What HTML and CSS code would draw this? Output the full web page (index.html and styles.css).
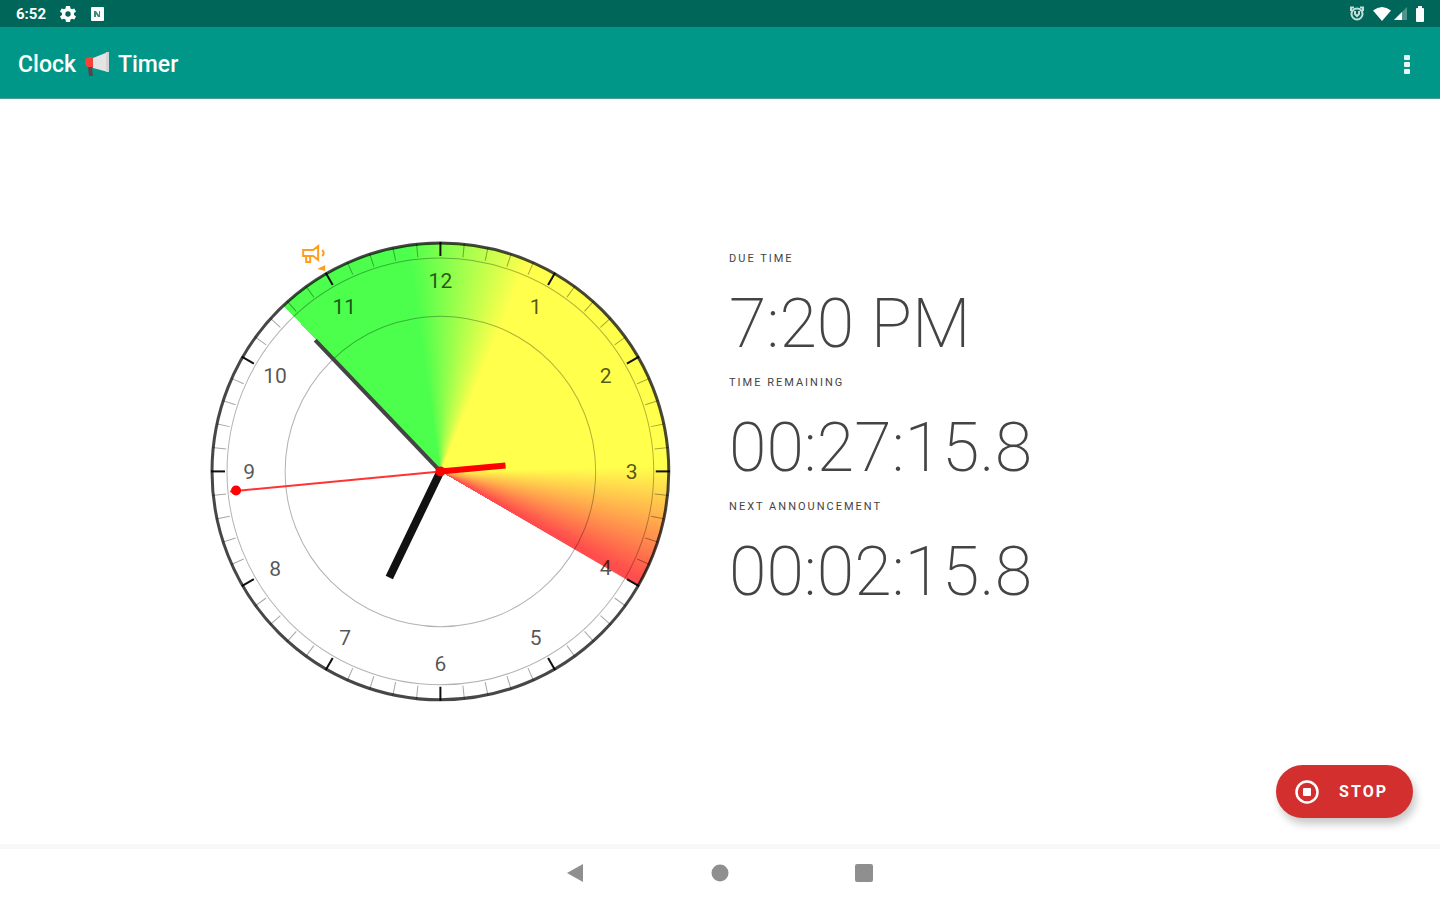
FILE: index.html
```html
<!DOCTYPE html>
<html lang="en">
<head>
    <meta charset="UTF-8">
    <meta name="viewport" content="width=device-width, initial-scale=1.0">
    <title>Clock Timer</title>
    <link rel="stylesheet" href="styles.css">
</head>
<body>

    <div class="status-bar">
        <span class="status-time">6:52</span>
        <svg class="status-icon" width="16" height="16" viewBox="0 0 16 16">
            <path d="M6 0h4l.5 2.500 1.500.8 2.300-.8 1.700 3L14 7v2l2 1.500-1.700 3-2.300-.8-1.500.8L10 16H6l-.5-2.500-1.500-.8-2.300.8-1.700-3L2 9V7L0 5.500l1.700-3 2.300.8 1.500-.8z" fill="#fff"/>
            <circle cx="8" cy="8" r="2.700" fill="#00665a"/>
        </svg>
        <svg class="status-icon" width="14" height="14" viewBox="0 0 14 14">
            <rect x="1" y="0" width="13" height="14" rx="1" fill="#fff"/>
            <path d="M4 10V4h2l3 4V4h1v6H8L6 7v3z" fill="#3d8a81"/>
        </svg>
        <span class="spacer"></span>
        <svg width="16" height="16" viewBox="0 0 16 16" fill="none" stroke="#c4dedb" stroke-width="2">
            <circle cx="8" cy="8" r="5.500"/>
            <path d="M2 5V1.500h3M11 1.500h3V5M6 5v3l2 2 2-2V5"/>
        </svg>
        <svg class="wifi" width="18" height="14" viewBox="0 0 18 14">
            <path d="M0 3.500Q9-3.500 18 3.500L9 14z" fill="#fff"/>
        </svg>
        <svg width="13" height="13" viewBox="0 0 13 13">
            <path d="M13 0v13H0z" fill="#4f958d"/>
            <path d="M8 5v8H0z" fill="#fff"/>
        </svg>
        <svg class="battery" width="10" height="16" viewBox="0 0 10 16">
            <path d="M3 0h4v2h1q1 0 1 1v12q0 1-1 1H2q-1 0-1-1V3q0-1 1-1h1z" fill="#fff"/>
        </svg>
    </div>

    <header class="app-bar">
        <h1 class="title">
            Clock
            <svg width="26" height="26" viewBox="0 0 26 26">
                <path d="M4 15h4l1 9H5z" fill="#5b4446"/>
                <path d="M9 6L24 0v20L9 16z" fill="#e4e4e4"/>
                <path d="M22 0h3v20h-3z" fill="#cfd4d4"/>
                <path d="M9 5v10H4q-3-1-3-5t3-5z" fill="#f44336"/>
            </svg>
            Timer
        </h1>
        <button class="menu-button" aria-label="More options">
            <svg width="6" height="20" viewBox="0 0 6 20" fill="#e6f4f3">
                <rect x="0" y="0" width="6" height="5" rx="1"/>
                <rect x="0" y="7" width="6" height="5" rx="1"/>
                <rect x="0" y="14" width="6" height="5" rx="1"/>
            </svg>
        </button>
    </header>

    <main class="timer">
        <div class="clock">
            <svg class="face" viewBox="-230 -230 460 460">
                <circle class="ring-thin" r="213"/>
                <circle class="ring-thin" r="155"/>
                <g id="ticks"></g>
                <circle class="ring" r="228"/>
                <g id="numbers"></g>
                <line class="minute-hand" x2="-125" y2="-131"/>
                <line class="hour-hand" x2="-51" y2="106"/>
                <line class="alarm-hand" x2="65" y2="-6"/>
                <line class="second-hand" x2="-210" y2="20"/>
                <circle class="dot" r="5"/>
                <circle class="dot" cx="-204" cy="19" r="5"/>
                <!-- announcement marker -->
                <g transform="translate(-139 -227)" fill="none" stroke="#ff9d1c" stroke-width="2">
                    <path d="M2 6h10l5-4v14l-5-4H2zM5 12v6h4v-6"/>
                    <path d="M21 6q3 3 0 6"/>
                    <path d="M16 25l8-4v6z" fill="#ff9d1c" stroke="none"/>
                </g>
            </svg>
        </div>

        <dl class="readouts">
            <dt>DUE TIME</dt>
            <dd>7:20 PM</dd>
            <dt>TIME REMAINING</dt>
            <dd>00:27:15.8</dd>
            <dt>NEXT ANNOUNCEMENT</dt>
            <dd>00:02:15.8</dd>
        </dl>

        <button class="stop-button">
            <svg width="24" height="24" viewBox="0 0 24 24">
                <circle cx="12" cy="12" r="10.500" fill="none" stroke="#fff" stroke-width="2.500"/>
                <rect x="8" y="8" width="8" height="8" rx="1" fill="#fff"/>
            </svg>
            STOP
        </button>
    </main>

    <nav class="nav-bar">
        <button aria-label="Back">
            <svg width="18" height="20" viewBox="0 0 18 20"><path d="M0 10L16 1v18z"/></svg>
        </button>
        <button aria-label="Home">
            <svg width="18" height="18" viewBox="0 0 18 18"><circle cx="9" cy="9" r="8.500"/></svg>
        </button>
        <button aria-label="Recent apps">
            <svg width="18" height="18" viewBox="0 0 18 18"><rect width="18" height="18" rx="2"/></svg>
        </button>
    </nav>

    <script>
        const NS = 'http://www.w3.org/2000/svg';
        const ticks = document.getElementById('ticks');
        const numbers = document.getElementById('numbers');

        for (let i = 0; i < 60; i++) {
            const tick = document.createElementNS(NS, 'line');
            tick.setAttribute('y1', -229);
            tick.setAttribute('y2', -215);
            tick.setAttribute('transform', `rotate(${i * 6})`);
            tick.setAttribute('class', i % 5 === 0 ? 'tick-hour' : 'tick');
            ticks.appendChild(tick);
        }

        for (let h = 1; h <= 12; h++) {
            const angle = h * Math.PI / 6;
            const text = document.createElementNS(NS, 'text');
            text.setAttribute('x', Math.round(191 * Math.sin(angle)));
            text.setAttribute('y', Math.round(-191 * Math.cos(angle)) + 8);
            text.textContent = h;
            numbers.appendChild(text);
        }
    </script>

</body>
</html>
```
FILE: styles.css
```css
* {
    box-sizing: border-box;
}
body {
    margin: 0;
    min-height: 100vh;
    display: flex;
    flex-direction: column;
    background-color: #fff;
    font-family: Roboto, sans-serif;
    color: #444;
}
button {
    border: none;
    background: none;
    padding: 0;
    font-family: inherit;
    cursor: pointer;
}
svg {
    display: block;
}
.status-bar {
    display: flex;
    align-items: center;
    height: 27px;
    padding: 0 15px 0 16px;
    background-color: #00665a;
    color: #fff;
}
.status-time {
    font-size: 15px;
    font-weight: 700;
}
.status-icon {
    margin-left: 14px;
}
.spacer {
    flex: 1;
}
.wifi {
    margin: 0 3px 0 8px;
}
.battery {
    margin-left: 8px;
}
.app-bar {
    display: flex;
    align-items: center;
    justify-content: space-between;
    height: 72px;
    padding: 4px 22px 0 18px;
    background-color: #009688;
    border-bottom: 1px solid #4d9c95;
}
.title {
    display: flex;
    align-items: center;
    gap: 8px;
    margin: 0;
    font-size: 23px;
    font-weight: 500;
    color: #fff;
}
.menu-button {
    padding: 8px;
}
.timer {
    position: relative;
    flex: 1;
    display: flex;
    align-items: center;
    gap: 58px;
    padding: 0 14.6%;
}
.clock {
    position: relative;
    flex: none;
    width: 32vw;
    aspect-ratio: 1;
}
/* remaining time wedge, drawn under the face */
.clock::before {
    content: "";
    position: absolute;
    inset: 2px;
    border-radius: 50%;
    background: conic-gradient(from 316.6deg, #4cff4c 0deg 35deg, #ffff4c 66deg 132deg, #ff4c4c 162deg 163.4deg, transparent 163.7deg);
}
.face {
    position: relative;
    width: 100%;
    overflow: visible;
}
.ring {
    fill: none;
    stroke: rgba(0, 0, 0, 0.72);
    stroke-width: 3;
}
.ring-thin {
    fill: none;
    stroke: rgba(0, 0, 0, 0.3);
}
.tick {
    stroke: rgba(0, 0, 0, 0.35);
}
.tick-hour {
    stroke: #111;
    stroke-width: 2;
}
#numbers text {
    font-size: 21px;
    fill: rgba(0, 0, 0, 0.68);
    text-anchor: middle;
}
.minute-hand {
    stroke: #444;
    stroke-width: 4;
}
.hour-hand {
    stroke: #111;
    stroke-width: 8;
}
.alarm-hand {
    stroke: #f00;
    stroke-width: 6;
}
.second-hand {
    stroke: #f33;
    stroke-width: 2;
}
.dot {
    fill: #f00;
}
.readouts {
    height: 32vw;
    margin: 0;
    padding-top: 10px;
}
.readouts dt {
    font-size: 11px;
    line-height: 16px;
    letter-spacing: 2px;
}
.readouts dd {
    margin: 0;
    padding-top: 6px;
    font-size: 68px;
    font-weight: 200;
    line-height: 102px;
    white-space: nowrap;
}
.stop-button {
    position: absolute;
    right: 27px;
    bottom: 26px;
    display: flex;
    align-items: center;
    gap: 20px;
    height: 53px;
    padding: 0 25px 0 19px;
    border-radius: 27px;
    background-color: #d32f2f;
    box-shadow: 3px 6px 8px rgba(0, 0, 0, 0.22);
    font-size: 16px;
    font-weight: 700;
    letter-spacing: 2px;
    color: #fff;
}
.nav-bar {
    display: flex;
    align-items: center;
    justify-content: center;
    gap: 126px;
    height: 56px;
    padding-bottom: 3px;
    border-top: 5px solid #f8f8f8;
}
.nav-bar svg {
    fill: #8f8f8f;
}
```
